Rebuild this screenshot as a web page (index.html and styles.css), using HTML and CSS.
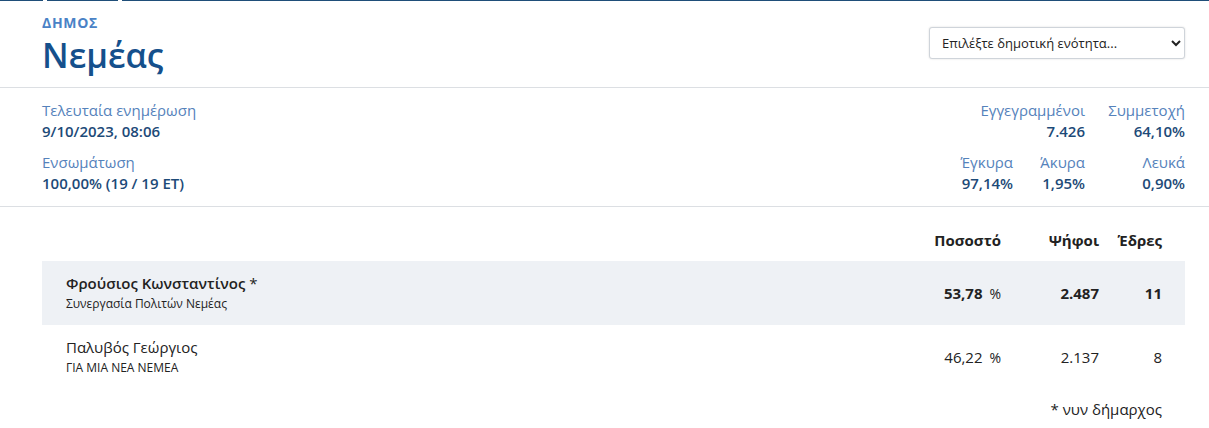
FILE: index.html
```html
<!DOCTYPE html>
<html lang="el">
<head>
    <meta charset="UTF-8">
    <meta name="viewport" content="width=device-width, initial-scale=1.0">
    <title>Δήμος Νεμέας</title>
    <link rel="stylesheet" href="styles.css">
</head>
<body>
    <div class="top-line">
        <span class="seg seg-a"></span>
        <span class="seg seg-b"></span>
        <span class="seg seg-c"></span>
    </div>

    <header class="page-head">
        <div class="title-block">
            <div class="kicker">Δημος</div>
            <h1>Νεμέας</h1>
        </div>
        <select class="unit-select">
            <option>Επιλέξτε δημοτική ενότητα...</option>
        </select>
    </header>

    <section class="stats">
        <div class="stats-left">
            <div class="stat">
                <div class="label">Τελευταία ενημέρωση</div>
                <div class="value">9/10/2023, 08:06</div>
            </div>
            <div class="stat">
                <div class="label">Ενσωμάτωση</div>
                <div class="value">100,00% (19 / 19 ET)</div>
            </div>
        </div>
        <div class="stats-right">
            <div class="stat wide">
                <div class="label">Εγγεγραμμένοι</div>
                <div class="value">7.426</div>
            </div>
            <div class="stat">
                <div class="label">Συμμετοχή</div>
                <div class="value">64,10%</div>
            </div>
            <div class="stat">
                <div class="label">Έγκυρα</div>
                <div class="value">97,14%</div>
            </div>
            <div class="stat">
                <div class="label">Άκυρα</div>
                <div class="value">1,95%</div>
            </div>
            <div class="stat">
                <div class="label">Λευκά</div>
                <div class="value">0,90%</div>
            </div>
        </div>
    </section>

    <section class="results">
        <div class="row head">
            <div></div>
            <div class="num">Ποσοστό</div>
            <div class="num">Ψήφοι</div>
            <div class="num">Έδρες</div>
        </div>
        <div class="row winner">
            <div class="cand">
                <div class="name">Φρούσιος Κωνσταντίνος <span class="star">*</span></div>
                <div class="party">Συνεργασία Πολιτών Νεμέας</div>
            </div>
            <div class="num">53,78 <small>%</small></div>
            <div class="num">2.487</div>
            <div class="num">11</div>
        </div>
        <div class="row">
            <div class="cand">
                <div class="name">Παλυβός Γεώργιος</div>
                <div class="party">ΓΙΑ ΜΙΑ ΝΕΑ ΝΕΜΕΑ</div>
            </div>
            <div class="num">46,22 <small>%</small></div>
            <div class="num">2.137</div>
            <div class="num">8</div>
        </div>
        <div class="note">* νυν δήμαρχος</div>
    </section>
</body>
</html>
```

FILE: styles.css
```css
body {
    margin: 0;
    font-family: "Open Sans", "Noto Sans", sans-serif;
    color: #222;
    background: #fff;
}

/* thin tab line at the very top */
.top-line {
    display: flex;
    gap: 4px;
    height: 1px;
}

.seg {
    background-color: #1f4e79;
}

.seg-a { width: 43px; }
.seg-b { width: 71px; }
.seg-c { flex: 1; }

.page-head {
    display: flex;
    justify-content: space-between;
    align-items: center;
    padding: 0 24px 0 42px;
    height: 86px;
    border-bottom: 1px solid #dcdfe3;
}

.title-block {
    padding-top: 4px;
}

.kicker {
    font-size: 14px;
    font-weight: 700;
    text-transform: uppercase;
    letter-spacing: 0.7px;
    color: #4a82c6;
    line-height: 18px;
}

h1 {
    margin: 0;
    font-size: 34px;
    font-weight: 600;
    color: #15508c;
    line-height: 46px;
}

.unit-select {
    width: 256px;
    height: 32px;
    padding: 0 8px;
    font-family: inherit;
    font-size: 13px;
    color: #222;
    background: #fff;
    border: 1px solid #cfd4da;
    border-radius: 3px;
    box-shadow: 0 0 2px rgba(0, 0, 0, 0.15);
    margin-bottom: 2px;
}

.stats {
    display: flex;
    justify-content: space-between;
    padding: 12px 24px 12px 42px;
    border-bottom: 1px solid #dcdfe3;
}

.stats-left .stat + .stat {
    margin-top: 10px;
}

.stats-right {
    display: grid;
    grid-template-columns: auto 72px 100px;
    row-gap: 10px;
    text-align: right;
}

.stats-right .wide {
    grid-column: span 2;
}

.label {
    font-size: 15px;
    line-height: 21px;
    color: #5582bb;
}

.value {
    font-size: 15px;
    line-height: 21px;
    font-weight: 600;
    color: #1d4a78;
}

.results {
    padding: 22px 24px 0 42px;
}

.row {
    display: grid;
    grid-template-columns: 1fr 120px 98px 63px;
    align-items: center;
    padding: 0 23px 0 24px;
    font-size: 15px;
    height: 64px;
}

.row.head {
    height: 32px;
    font-weight: 700;
    align-items: start;
    line-height: 22px;
}

.row.winner {
    background-color: #eef1f5;
    font-weight: 700;
}

.num {
    text-align: right;
}

.num small {
    font-size: 14px;
    font-weight: 400;
    margin-left: 3px;
}

.name {
    font-size: 15px;
    line-height: 22px;
    font-weight: 400;
}

.winner .name {
    font-weight: 600;
}

.star {
    font-weight: 400;
}

.party {
    font-size: 12px;
    line-height: 20px;
    font-weight: 400;
}

.note {
    text-align: right;
    padding: 6px 23px 0 0;
    font-size: 15px;
    line-height: 28px;
}
```
